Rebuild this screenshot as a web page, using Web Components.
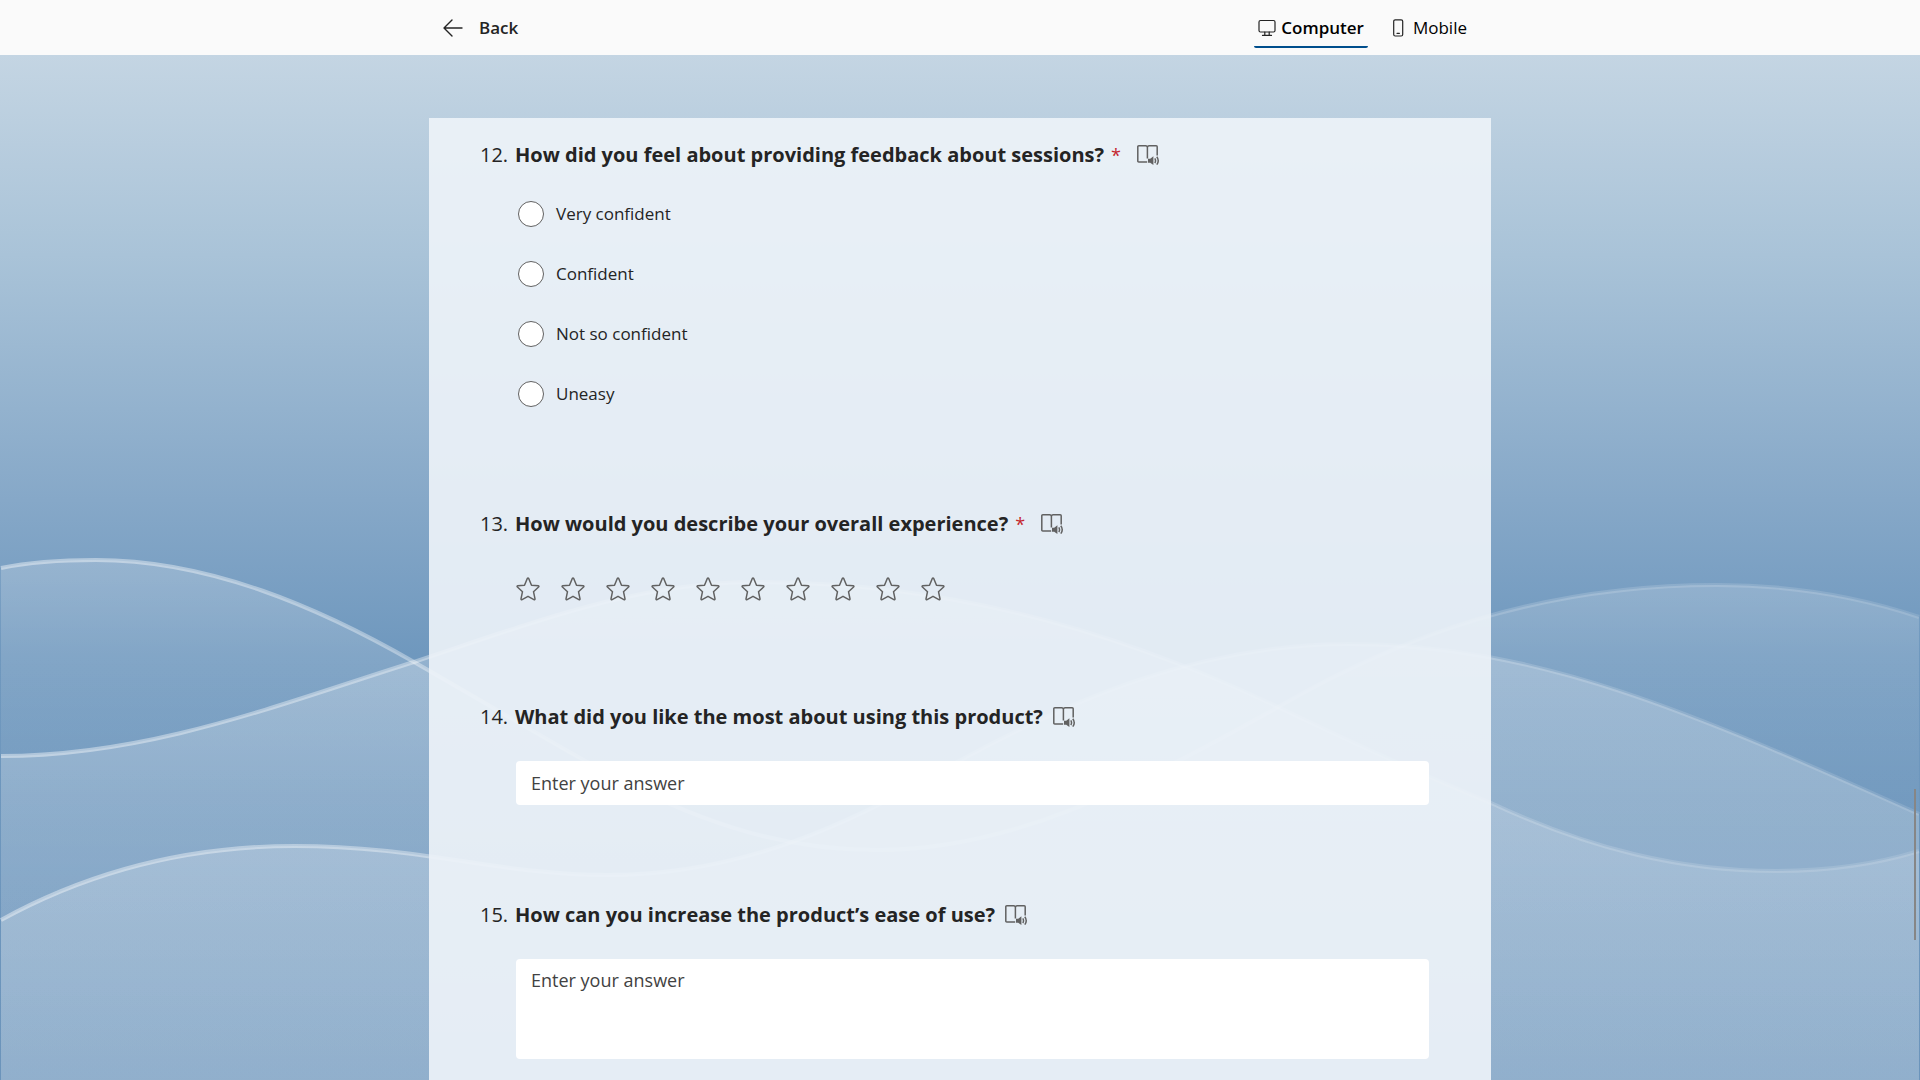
<!DOCTYPE html>
<html lang="en">
<head>
<meta charset="utf-8">
<title>Form preview</title>
<style>
  html, body { margin: 0; height: 100%; }
  body {
    font-family: "Open Sans", "Noto Sans", sans-serif;
    font-size: 17px;
    line-height: 24px;
    color: #242424;
    overflow: hidden;
  }
</style>
</head>
<body>
<form-preview>
  <preview-header slot="header"></preview-header>
  <choice-question number="12" required options="Very confident|Confident|Not so confident|Uneasy">How did you feel about providing feedback about sessions?</choice-question>
  <rating-question number="13" required levels="10">How would you describe your overall experience?</rating-question>
  <text-question number="14">What did you like the most about using this product?</text-question>
  <text-question number="15" multiline>How can you increase the product’s ease of use?</text-question>
</form-preview>

<script>
  const define = (name, render) => customElements.define(name, class extends HTMLElement {
    connectedCallback() {
      if (this.shadowRoot) return;
      this.attachShadow({ mode: 'open' }).innerHTML = render(this);
    }
  });

  /* Page shell: header on top, waves behind, the form sheet in the middle */
  define('form-preview', () => `
    <style>
      :host { display: flex; flex-direction: column; height: 100vh; }
      .stage { position: relative; flex: 1; min-height: 0; overflow: hidden; }
      wave-backdrop { position: absolute; inset: 0; }
      main {
        position: relative;
        box-sizing: border-box;
        width: min(100%, 1062px);
        min-height: 100%;
        margin: 63px auto 0;
        padding: 23px 62px 80px 51px;
        background: rgba(237, 243, 248, .91);
        display: flex; flex-direction: column; gap: 80px;
      }
      .thumb { position: absolute; right: 4px; top: 734px; width: 2px; height: 151px; background: #868686; }
    </style>
    <slot name="header"></slot>
    <div class="stage">
      <wave-backdrop></wave-backdrop>
      <main><slot></slot></main>
      <div class="thumb"></div>
    </div>`);

  /* Waves, drawn in the coordinates of the area below the header */
  const waveA = 'M1 568C30 562 62 560 96 560C210 560 320 608 414 662C510 717 560 748 620 780C710 827 790 850 877 850C1010 850 1130 790 1278 707C1400 636 1540 585 1717 585C1790 585 1860 597 1919 617';
  const waveB = 'M1 756C150 756 280 704 414 662C540 620 640 582 756 582C930 582 1100 622 1278 707C1370 751 1430 778 1491 803C1590 849 1680 871 1776 871C1830 871 1880 863 1919 851';
  const waveC = 'M1 920C90 871 190 846 295 846C420 846 500 875 607 875C740 875 850 825 957 762C1070 700 1200 644 1349 644C1540 644 1700 716 1919 814';
  define('wave-backdrop', () => `
    <style>
      :host { display: block; background: linear-gradient(#c4d5e3 0, #a9c3d8 200px, #86a8c8 445px, #6f98be 600px, #6b94bb 100%); }
      svg { display: block; width: 100%; height: 100%; }
      .line { fill: none; stroke: url(#line); stroke-width: 4; }
    </style>
    <svg viewBox="0 55 1920 1025" preserveAspectRatio="none" aria-hidden="true">
      <defs>
        <linearGradient id="line" gradientUnits="userSpaceOnUse" x1="0" y1="0" x2="1920" y2="0">
          <stop offset="0" stop-color="#fff" stop-opacity=".42"/><stop offset=".22" stop-color="#fff" stop-opacity=".36"/><stop offset=".7" stop-color="#fff" stop-opacity=".18"/><stop offset="1" stop-color="#fff" stop-opacity=".12"/>
        </linearGradient>
        <linearGradient id="a" gradientUnits="userSpaceOnUse" x1="0" y1="560" x2="0" y2="1080">
          <stop offset="0" stop-color="#fff" stop-opacity=".2"/><stop offset=".46" stop-color="#fff" stop-opacity=".04"/><stop offset="1" stop-color="#fff" stop-opacity="0"/>
        </linearGradient>
        <linearGradient id="b" gradientUnits="userSpaceOnUse" x1="0" y1="582" x2="0" y2="1080">
          <stop offset="0" stop-color="#fff" stop-opacity=".28"/><stop offset="1" stop-color="#fff" stop-opacity=".08"/>
        </linearGradient>
        <linearGradient id="c" gradientUnits="userSpaceOnUse" x1="0" y1="644" x2="0" y2="1080">
          <stop offset="0" stop-color="#fff" stop-opacity=".25"/><stop offset="1" stop-color="#fff" stop-opacity=".19"/>
        </linearGradient>
      </defs>
      <path fill="url(#a)" d="${waveA}V1080H1Z"/><path class="line" d="${waveA}"/>
      <path fill="url(#b)" d="${waveB}V1080H1Z"/><path class="line" d="${waveB}"/>
      <path fill="url(#c)" d="${waveC}V1080H1Z"/><path class="line" d="${waveC}"/>
    </svg>`);

  define('preview-header', () => `
    <style>
      :host { display: block; background: #fafafa; }
      .bar {
        box-sizing: border-box; width: min(100%, 1062px); height: 55px; margin: 0 auto;
        padding: 0 20px 0 14px;
        display: flex; align-items: center; justify-content: space-between;
      }
      button {
        font: inherit; color: #242424; background: none; border: 0; padding: 0;
        display: flex; align-items: center; cursor: pointer;
      }
      svg { display: block; fill: none; stroke: currentColor; }
      .back { font-weight: 600; gap: 16px; }
      .tabs { display: flex; gap: 16px; }
      .tab { color: #000; padding: 9px 4px 6px; gap: 5px; border-bottom: 2px solid transparent; border-radius: 2px; }
      .tab.on { font-weight: 600; border-bottom-color: #004e8c; }
      .tab svg { color: #242424; }
    </style>
    <div class="bar">
      <button class="back" type="button">
        <svg width="20" height="18" viewBox="0 0 20 18" stroke-width="1.400" stroke-linecap="round" stroke-linejoin="round"><path d="M9 1 1 9l8 8M1.200 9H19"/></svg>
        <span>Back</span>
      </button>
      <div class="tabs" role="tablist">
        <button class="tab on" type="button" role="tab" aria-selected="true">
          <svg width="18" height="18" viewBox="0 0 18 18" stroke-width="1.200" stroke-linejoin="round" stroke-linecap="round"><rect x="1" y="1.500" width="16" height="11.500" rx="1.500"/><path d="M6.800 13v3.200M11.200 13v3.200M4.500 16.400h9"/></svg>
          <span>Computer</span>
        </button>
        <button class="tab" type="button" role="tab" aria-selected="false">
          <svg width="20" height="18" viewBox="0 0 20 18" stroke-width="1.200" stroke-linecap="round"><rect x="5.700" y=".8" width="9" height="16.200" rx="1.500"/><path d="M9 14.300h2.400"/></svg>
          <span>Mobile</span>
        </button>
      </div>
    </div>`);

  define('reader-button', () => `
    <style>
      :host { display: block; }
      button { display: block; padding: 0; border: 0; background: none; color: #616161; cursor: pointer; }
      svg { display: block; }
    </style>
    <button type="button" aria-label="Immersive Reader">
      <svg width="23" height="21" viewBox="0 0 23 21" fill="none" stroke="currentColor" stroke-width="1.500">
        <path d="M10.200 17H1.800Q.8 17 .8 16V1.800Q.8.8 1.800.8H8.600Q10.400.8 10.400 2.600V13.500M10.400 2.600Q10.400.8 12.200.8H19.200Q20.200.8 20.200 1.800V10.500"/>
        <path fill="currentColor" stroke="none" d="M11 13.700h2.200L16.400 11.300V20L13.200 17.700H11Z"/>
        <path d="M17.800 13.300Q19.300 15.700 17.800 18M19.800 11.700Q22.700 15.700 19.800 19.600"/>
      </svg>
    </button>`);

  /* Shared frame: number, title, reader button, body */
  const frame = (host, css, body) => `
    <style>
      :host { display: flex; font-size: 17px; }
      .number { flex: none; width: 35px; font-size: 20px; line-height: 28px; }
      .content { flex: 1; min-width: 0; display: flex; flex-direction: column; gap: 15px; }
      .head { display: flex; align-items: center; gap: 10px; }
      .title { font-size: 20px; line-height: 28px; font-weight: 700; }
      .star { font-size: 18px; font-weight: 400; color: #c4262e; margin: 0 6px 0 -3px; }
      ${css}
    </style>
    <span class="number">${host.getAttribute('number')}.</span>
    <div class="content">
      <div class="head">
        <label class="title" id="title" for="answer"><slot></slot></label>
        ${host.hasAttribute('required') ? '<span class="star">*</span>' : ''}
        <reader-button></reader-button>
      </div>
      ${body}
    </div>`;

  define('choice-question', host => frame(host, `
      .choices { display: flex; flex-direction: column; padding-bottom: 6px; }
      .choice { display: flex; align-items: center; gap: 12px; height: 60px; padding-left: 3px; }
      input {
        appearance: none; box-sizing: border-box; width: 26px; height: 26px; margin: 0;
        border: 1px solid #616161; border-radius: 50%; background: #fff;
      }
      input:checked { border: 8px solid #004e8c; }`,
    `<div class="choices" role="radiogroup" aria-labelledby="title">
      ${host.getAttribute('options').split('|').map((text, i) => `
        <label class="choice"><input type="radio" name="choice" ${i ? '' : 'id="answer"'}><span>${text}</span></label>`).join('')}
    </div>`));

  define('rating-question', host => frame(host, `
      .stars { display: flex; gap: 21px; padding: 24px 0 22px 1px; }
      .level { position: relative; display: block; width: 24px; height: 24px; }
      input { position: absolute; inset: 0; width: 100%; height: 100%; margin: 0; opacity: 0; }
      svg { display: block; overflow: visible; }`,
    `<div class="stars" role="radiogroup" aria-labelledby="title">
      ${Array.from({ length: +host.getAttribute('levels') }, (_, i) => `
        <label class="level"><input type="radio" name="level" aria-label="${i + 1}" ${i ? '' : 'id="answer"'}>
          <svg width="24" height="24" viewBox="0 0 24 24" fill="none" stroke="#616161" stroke-width="1.500" stroke-linejoin="round"><path d="M11.300 1.500Q12 .5 12.700 1.500L15.500 8.200 22.300 8.800Q23.400 9.100 22.600 10L17.500 14.700 19 21.900Q19 23.100 17.900 22.600L12 19.300 6.100 22.600Q5 23.100 5 21.900L6.500 14.700 1.400 10Q.6 9.100 1.700 8.800L8.500 8.200Z"/></svg>
        </label>`).join('')}
    </div>`));

  define('text-question', host => frame(host, `
      .field { display: flex; padding: 15px 0 16px 1px; }
      input, textarea {
        box-sizing: border-box; width: 100%; height: 44px; margin: 0; padding: 8px 15px;
        font: inherit; font-size: 18px; line-height: 26px; color: #242424;
        border: 0; border-radius: 4px; background: #fff; resize: none;
      }
      textarea { height: 100px; }
      ::placeholder { color: #424242; opacity: 1; }`,
    `<div class="field">${host.hasAttribute('multiline')
      ? '<textarea id="answer" placeholder="Enter your answer"></textarea>'
      : '<input id="answer" type="text" placeholder="Enter your answer">'}</div>`));
</script>
</body>
</html>
